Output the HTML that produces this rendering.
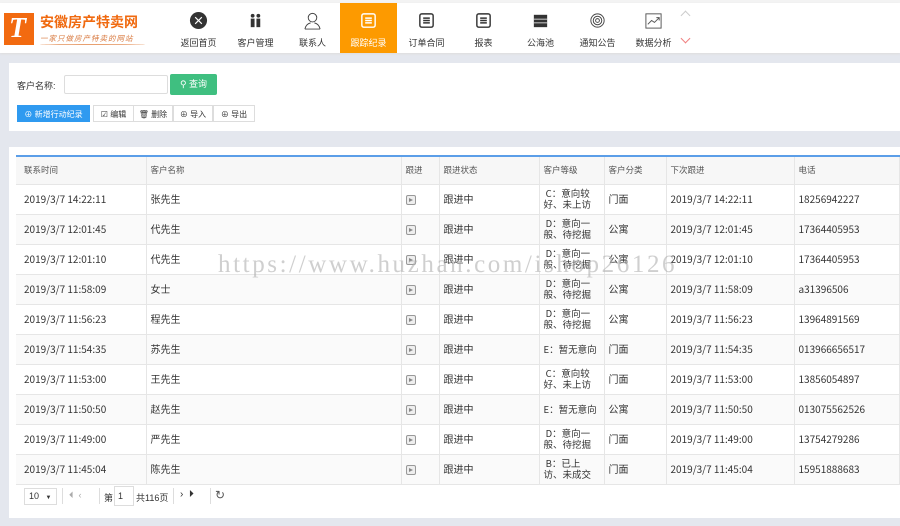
<!DOCTYPE html>
<html><head><meta charset="utf-8"><style>
*{margin:0;padding:0;box-sizing:border-box}
body{width:900px;height:526px;overflow:hidden;background:#e4e7ee;font-family:"Liberation Sans","Noto Sans CJK SC",sans-serif;font-size:9px;color:#333;position:relative}
.top{position:absolute;left:0;top:0;width:900px;height:3px;background:#f3f3f3}
.hdr{position:absolute;left:0;top:3px;width:900px;height:50px;background:#fff;box-shadow:0 1px 2px #ddd}
.nav{position:absolute;top:0;width:57px;height:50px;text-align:center;font-size:9px;color:#333}
.nav .ic{position:absolute;left:19px;top:8px;width:19px;height:19px}
.nav span{position:absolute;left:0;right:0;top:33px}
.nav.act{background:#fd9a00;color:#fff}
.panel{position:absolute;left:9px;background:#fff;width:891px}
.btn{position:absolute;height:17px;line-height:17px;font-size:8px;border:1px solid #ddd;text-align:center;color:#333;background:#fff}
table{position:absolute;left:16px;top:155px;width:884px;border-collapse:collapse;border-top:2px solid #5b9ee8;table-layout:fixed}
td{height:30px;font-family:"Noto Sans CJK SC",sans-serif;font-size:10px;line-height:12px;padding-left:4px;border-bottom:1px solid #e6e6e6;border-right:1px solid #e6e6e6;vertical-align:middle;white-space:nowrap;overflow:hidden}
td:first-child{padding-left:8px}
tr.h td{height:28px;background:#f7f7f7;font-size:8.5px;color:#555}
tr:nth-child(odd):not(.h) td{background:#fafafa}
td.l{font-size:9.5px;line-height:11px}
.pl{display:inline-block;width:10px;height:10px;border:1.5px solid #999;border-radius:2px;position:relative;vertical-align:middle;background:#eee}
.pl:after{content:"";position:absolute;left:2.5px;top:1.5px;border-left:4px solid #888;border-top:2.5px solid transparent;border-bottom:2.5px solid transparent}
.wm{position:absolute;left:218px;top:251px;font-family:"Liberation Serif",serif;font-size:25px;color:rgba(175,175,175,.6);letter-spacing:2.6px;white-space:nowrap}
</style></head><body>
<div class="top"></div>
<div class="hdr">
 <div style="position:absolute;left:4px;top:10px;width:30px;height:32px;background:#f26a10"><div style="color:#fff;font:italic bold 28px 'Liberation Serif',serif;position:absolute;left:5px;top:0">T</div></div>
 <div style="position:absolute;left:40px;top:9px;font-size:14px;font-weight:bold;color:#f06a10">安徽房产特卖网</div>
 <div style="position:absolute;left:40px;top:30px;font-size:7.5px;color:#d97a40;font-style:italic;letter-spacing:1px">一家只做房产特卖的网站</div>
 <div style="position:absolute;left:40px;top:40px;width:105px;height:2px;border-bottom:1px solid #e8a070;border-radius:50%"></div>

 <div class="nav" style="left:170px"><svg class="ic" viewBox="0 0 20 20"><circle cx="10" cy="10" r="9" fill="#333"/><path d="M6.5 6.5l7 7M13.5 6.5l-7 7" stroke="#fff" stroke-width="1.2"/></svg><span>返回首页</span></div>
 <div class="nav" style="left:227px"><svg class="ic" viewBox="0 0 20 20"><circle cx="7" cy="5" r="2" fill="#333"/><circle cx="13" cy="5" r="2" fill="#333"/><rect x="5" y="8" width="4" height="9" fill="#333"/><rect x="11" y="8" width="4" height="9" fill="#333"/></svg><span>客户管理</span></div>
 <div class="nav" style="left:284px"><svg class="ic" viewBox="0 0 20 20" fill="none" stroke="#444" stroke-width="1"><circle cx="10" cy="7" r="4.5"/><path d="M2 19c1-5 4-6 6-6.5M18 19c-1-5-4-6-6-6.5M2 19h16"/></svg><span>联系人</span></div>
 <div class="nav act" style="left:340px"><svg class="ic" viewBox="0 0 20 20" fill="none" stroke="#fff" stroke-width="1.5"><rect x="3" y="3" width="14" height="14" rx="2"/><path d="M6.5 7.5h7M6.5 10h7M6.5 12.5h7"/></svg><span>跟踪纪录</span></div>
 <div class="nav" style="left:398px"><svg class="ic" viewBox="0 0 20 20" fill="none" stroke="#333" stroke-width="1.5"><rect x="3" y="3" width="14" height="14" rx="2"/><path d="M6.5 7.5h7M6.5 10h7M6.5 12.5h7"/></svg><span>订单合同</span></div>
 <div class="nav" style="left:455px"><svg class="ic" viewBox="0 0 20 20" fill="none" stroke="#333" stroke-width="1.5"><rect x="3" y="3" width="14" height="14" rx="2"/><path d="M6.5 7.5h7M6.5 10h7M6.5 12.5h7"/></svg><span>报表</span></div>
 <div class="nav" style="left:512px"><svg class="ic" viewBox="0 0 20 20"><rect x="3" y="4" width="14" height="13" fill="#333"/><path d="M3 8.5h14M3 12.5h14" stroke="#fff" stroke-width="0.8"/></svg><span>公海池</span></div>
 <div class="nav" style="left:569px"><svg class="ic" viewBox="0 0 20 20" fill="none" stroke="#444" stroke-width="1"><circle cx="10" cy="10" r="7"/><circle cx="10" cy="10" r="4.5"/><circle cx="10" cy="10" r="2"/></svg><span>通知公告</span></div>
 <div class="nav" style="left:625px"><svg class="ic" viewBox="0 0 20 20" fill="none" stroke="#555" stroke-width="1"><rect x="2" y="3" width="16" height="15"/><path d="M4 14l4-4 3 2 5-5M13 7h3v3"/></svg><span>数据分析</span></div>
 <div style="position:absolute;left:682px;top:9px;width:7px;height:7px;border-left:1px solid #ccc;border-top:1px solid #ccc;transform:rotate(45deg)"></div>
 <div style="position:absolute;left:682px;top:32px;width:7px;height:7px;border-right:1px solid #f08080;border-bottom:1px solid #f08080;transform:rotate(45deg)"></div>
</div>

<div class="panel" style="top:63px;height:68px">
 <div style="position:absolute;left:8px;top:16px;font-size:9px">客户名称:</div>
 <div style="position:absolute;left:55px;top:12px;width:104px;height:19px;border:1px solid #ddd;border-radius:2px"></div>
 <div style="position:absolute;left:161px;top:11px;width:47px;height:21px;background:#3fbf80;color:#fff;font-size:9px;line-height:21px;text-align:center;border-radius:2px">⚲ 查询</div>
 <div class="btn" style="left:8px;top:42px;width:73px;background:#2f9af0;color:#fff;border-color:#2f9af0">⊕ 新增行动纪录</div>
 <div class="btn" style="left:84px;top:42px;width:41px">☑ 编辑</div>
 <div class="btn" style="left:124px;top:42px;width:40px">🗑 删除</div>
 <div class="btn" style="left:164px;top:42px;width:40px">⊕ 导入</div>
 <div class="btn" style="left:204px;top:42px;width:42px">⊕ 导出</div>
</div>

<div class="panel" style="top:147px;height:371px"></div>
<table>
<colgroup><col style="width:130px"><col style="width:255px"><col style="width:38px"><col style="width:100px"><col style="width:65px"><col style="width:62px"><col style="width:128px"><col></colgroup>
<tr class="h"><td>联系时间</td><td>客户名称</td><td>跟进</td><td>跟进状态</td><td>客户等级</td><td>客户分类</td><td>下次跟进</td><td>电话</td></tr>
<tr><td>2019/3/7 14:22:11</td><td>张先生</td><td><i class="pl"></i></td><td>跟进中</td><td class="l">&nbsp;C：意向较<br>好、未上访</td><td>门面</td><td>2019/3/7 14:22:11</td><td>18256942227</td></tr>
<tr><td>2019/3/7 12:01:45</td><td>代先生</td><td><i class="pl"></i></td><td>跟进中</td><td class="l">&nbsp;D：意向一<br>般、待挖掘</td><td>公寓</td><td>2019/3/7 12:01:45</td><td>17364405953</td></tr>
<tr><td>2019/3/7 12:01:10</td><td>代先生</td><td><i class="pl"></i></td><td>跟进中</td><td class="l">&nbsp;D：意向一<br>般、待挖掘</td><td>公寓</td><td>2019/3/7 12:01:10</td><td>17364405953</td></tr>
<tr><td>2019/3/7 11:58:09</td><td>女士</td><td><i class="pl"></i></td><td>跟进中</td><td class="l">&nbsp;D：意向一<br>般、待挖掘</td><td>公寓</td><td>2019/3/7 11:58:09</td><td>a31396506</td></tr>
<tr><td>2019/3/7 11:56:23</td><td>程先生</td><td><i class="pl"></i></td><td>跟进中</td><td class="l">&nbsp;D：意向一<br>般、待挖掘</td><td>公寓</td><td>2019/3/7 11:56:23</td><td>13964891569</td></tr>
<tr><td>2019/3/7 11:54:35</td><td>苏先生</td><td><i class="pl"></i></td><td>跟进中</td><td class="l">E：暂无意向</td><td>门面</td><td>2019/3/7 11:54:35</td><td>013966656517</td></tr>
<tr><td>2019/3/7 11:53:00</td><td>王先生</td><td><i class="pl"></i></td><td>跟进中</td><td class="l">&nbsp;C：意向较<br>好、未上访</td><td>门面</td><td>2019/3/7 11:53:00</td><td>13856054897</td></tr>
<tr><td>2019/3/7 11:50:50</td><td>赵先生</td><td><i class="pl"></i></td><td>跟进中</td><td class="l">E：暂无意向</td><td>公寓</td><td>2019/3/7 11:50:50</td><td>013075562526</td></tr>
<tr><td>2019/3/7 11:49:00</td><td>严先生</td><td><i class="pl"></i></td><td>跟进中</td><td class="l">&nbsp;D：意向一<br>般、待挖掘</td><td>门面</td><td>2019/3/7 11:49:00</td><td>13754279286</td></tr>
<tr><td>2019/3/7 11:45:04</td><td>陈先生</td><td><i class="pl"></i></td><td>跟进中</td><td class="l">&nbsp;B：已上<br>访、未成交</td><td>门面</td><td>2019/3/7 11:45:04</td><td>15951888683</td></tr>
</table>

<div style="position:absolute;left:24px;top:488px;width:33px;height:17px;border:1px solid #ddd;font-size:9px;line-height:15px;padding-left:4px">10 <span style="font-size:6px;margin-left:4px">▼</span></div>
<div style="position:absolute;left:62px;top:488px;width:1px;height:16px;background:#ddd"></div>
<div style="position:absolute;left:69px;top:490px;font-size:9px;color:#aaa">⏴ &nbsp;‹</div>
<div style="position:absolute;left:99px;top:488px;width:1px;height:16px;background:#ddd"></div>
<div style="position:absolute;left:104px;top:491px;font-size:9px">第</div>
<div style="position:absolute;left:114px;top:486px;width:20px;height:20px;border:1px solid #ddd;font-size:9px;padding:4px 3px">1</div>
<div style="position:absolute;left:136px;top:491px;font-size:9px">共116页</div>
<div style="position:absolute;left:173px;top:488px;width:1px;height:16px;background:#ddd"></div>
<div style="position:absolute;left:180px;top:489px;font-size:10px">› &nbsp;⏵</div>
<div style="position:absolute;left:210px;top:488px;width:1px;height:16px;background:#ddd"></div>
<div style="position:absolute;left:215px;top:488px;font-size:12px;color:#555">↻</div>

<div class="wm">https://www.huzhan.com/ishop26126</div>
</body></html>
